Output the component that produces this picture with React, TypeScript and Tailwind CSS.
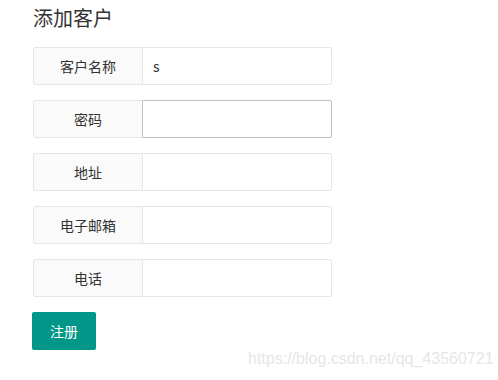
const fields = [
  { label: '客户名称', value: 's', focus: false },
  { label: '密码', value: '', focus: true },
  { label: '地址', value: '', focus: false },
  { label: '电子邮箱', value: '', focus: false },
  { label: '电话', value: '', focus: false },
];

export default function App() {
  return (
    <div
      className="relative w-[498px] h-[380px] bg-white pl-[33px] pt-[4px] text-[#333]"
      style={{ fontFamily: '"Noto Sans CJK SC", "Liberation Sans", sans-serif' }}
    >
      <h1 className="text-[20px] leading-[28px] font-normal mb-[15px]">添加客户</h1>

      <form className="flex flex-col gap-[15px]" onSubmit={(e) => e.preventDefault()}>
        {fields.map((f) => (
          <div key={f.label} className="flex h-[38px]">
            <label className="w-[110px] h-full flex items-center justify-center bg-[#fafafa] border border-[#e6e6e6] rounded-l-[2px] text-[14px]">
              {f.label}
            </label>
            <input
              type="text"
              defaultValue={f.value}
              className={
                f.focus
                  ? 'w-[190px] h-full -ml-px pl-[10px] border border-[#c2c2c2] rounded-r-[2px] text-[14px] outline-none bg-white'
                  : 'w-[190px] h-full -ml-px pl-[10px] border border-[#e6e6e6] rounded-r-[2px] text-[14px] outline-none bg-white'
              }
            />
          </div>
        ))}

        <div>
          <button
            type="submit"
            className="-ml-px h-[38px] px-[18px] bg-[#009688] text-white text-[14px] rounded-[2px]"
          >
            注册
          </button>
        </div>
      </form>

      {/* csdn watermark */}
      <div
        className="absolute left-[248px] top-[347px] text-[16px] text-[#e6e6e6] whitespace-nowrap"
        style={{ fontFamily: '"Liberation Sans", sans-serif' }}
      >
        https://blog.csdn.net/qq_43560721
      </div>
    </div>
  );
}
